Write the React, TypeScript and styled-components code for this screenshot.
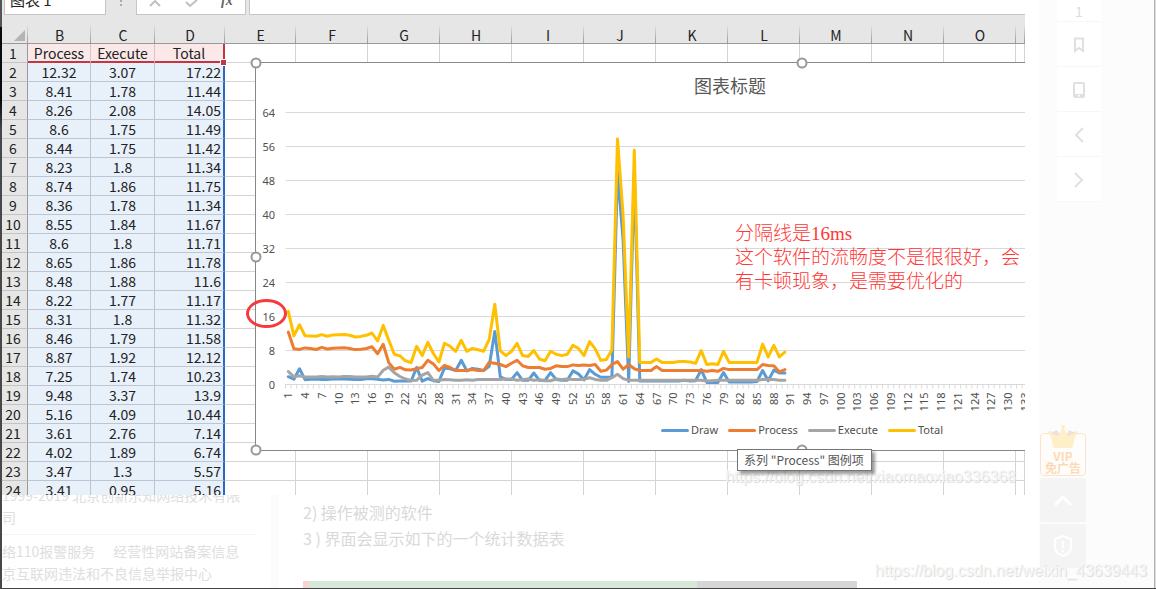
import React from "react";
import styled, { createGlobalStyle, css } from "styled-components";

const sans = `"Noto Sans CJK SC", "Noto Sans", sans-serif`;
const chartFont = `"Noto Sans", "Noto Sans CJK SC", sans-serif`;

const GlobalStyle = createGlobalStyle`
  *, *::before, *::after { box-sizing: border-box; }
  body { margin: 0; background: #fff; font-family: ${sans}; }
  button, input { font: inherit; color: inherit; }
`;

/* ---------- data ---------- */

const processData = [
  12.32, 8.41, 8.26, 8.6, 8.44, 8.23, 8.74, 8.36, 8.55, 8.6, 8.65, 8.48, 8.22, 8.31, 8.46, 8.87, 7.25,
  9.48, 5.16, 3.61, 4.02, 3.47, 3.41, 3.7, 4, 5.7, 4.8, 3.3, 4.5, 4, 3.3, 3.3, 3.3, 3.5, 3.3, 3.3, 5.2,
  5, 4.7, 4.2, 5, 5.7, 4.4, 4, 4, 4, 3.6, 3.8, 4.4, 4.2, 4.2, 4.6, 4.5, 4.6, 4.5, 4.7, 3.1, 3.4, 4.7,
  5.4, 3.6, 4.7, 3.7, 3.3, 3.3, 3.3, 4.2, 3.3, 3.3, 3.3, 3.3, 3.3, 3.3, 3.3, 3.3, 3.1, 3.3, 3.1, 3.8,
  3.5, 3.5, 3.5, 3.5, 3.5, 3.5, 4.7, 4.5, 4.4, 3, 3.5,
];
const executeData = [
  3.07, 1.78, 2.08, 1.75, 1.75, 1.8, 1.86, 1.78, 1.84, 1.8, 1.86, 1.88, 1.77, 1.8, 1.79, 1.92, 1.74,
  3.37, 4.09, 2.76, 1.89, 1.3, 0.95, 1, 2.2, 2.8, 1, 1, 1.2, 1.1, 1, 1, 1.1, 1, 1.2, 1.2, 1.2, 1.2,
  1.2, 1.3, 1.3, 1, 1.2, 1.3, 1, 1.1, 0.9, 0.9, 1.3, 1.2, 1.3, 1.2, 1.2, 1.2, 1.6, 1.2, 1, 1, 1.6,
  2.4, 1.4, 1, 1, 1, 1, 1, 1, 1, 1, 1, 1, 1, 1, 1, 1, 0.8, 0.9, 1, 1, 1, 1, 1, 1, 1, 1, 1.2, 1.2, 1.2,
  1, 1,
];
const totalData = [
  17.22, 11.44, 14.05, 11.49, 11.42, 11.34, 11.75, 11.34, 11.67, 11.71, 11.78, 11.6, 11.17, 11.32,
  11.58, 12.12, 10.23, 13.9, 10.44, 7.14, 6.74, 5.57, 5.16, 9, 6.8, 9.9, 7.3, 5.3, 9.7, 9, 7.8, 10.4,
  7.8, 8.5, 8.2, 7.8, 10.6, 18.9, 7.9, 6.8, 7.8, 9.7, 6.8, 6.6, 8, 6, 5.6, 7.8, 7.1, 6.8, 7.1, 9.2,
  8.5, 6.8, 10.1, 8.4, 5.7, 5.9, 8.2, 57.8, 39.8, 6.5, 55.1, 5.2, 5.2, 5.2, 6, 5.2, 5.2, 5.2, 5.4,
  5.4, 5.3, 5, 8, 4.7, 4.9, 4.7, 7.8, 5.2, 5.2, 5.2, 5.2, 5.2, 5.2, 9.5, 6.5, 9.2, 6.5, 7.6,
];
const drawTail = [
  4, 0.8, 1.4, 0.9, 0.7, 3.9, 3.7, 3.3, 5.7, 3.2, 3.8, 3.6, 3.3, 4.3, 12.5, 1.8, 1.2, 1.2, 2.8, 1, 1,
  2.7, 1, 1, 2.8, 1.2, 1, 1, 3.2, 2.5, 1.1, 3.5, 2.4, 1.7, 1.7, 1.7, 50, 34, 0.7, 50, 0.8, 0.8, 0.8,
  0.8, 0.8, 0.8, 0.8, 0.8, 1, 0.8, 0.9, 3.5, 0.5, 0.5, 0.5, 2.8, 0.6, 0.6, 0.6, 0.6, 0.6, 0.7, 3.3,
  0.9, 3.4, 2.7, 2.7,
];
const drawData = totalData
  .slice(0, 23)
  .map((t, i) => t - processData[i] - executeData[i])
  .concat(drawTail);

const series = [
  { name: "Draw", color: "#5b9bd5", values: drawData },
  { name: "Process", color: "#ed7d31", values: processData },
  { name: "Execute", color: "#a5a5a5", values: executeData },
  { name: "Total", color: "#ffc000", values: totalData },
];

const otherColumns = ["E", "F", "G", "H", "I", "J", "K", "L", "M", "N", "O", ""];

/* ---------- page frame ---------- */

const Page = styled.div`
  display: flex;
  min-height: 100vh;
  background: #fff;
  border-bottom: 1px solid #444;
  position: relative;
  overflow: hidden;
`;
const WindowEdge = styled.div`
  flex: none;
  width: 2px;
  background: linear-gradient(#555 27px, #0a0a0a 27px, #0a0a0a 100px, #484848 130px);
`;
const Content = styled.div`
  flex: 1;
  min-width: 0;
`;

/* ---------- workbook ---------- */

const Workbook = styled.section`
  position: relative;
  height: 495px;
  overflow: hidden;
  background: #fff;
`;
const FormulaBar = styled.div`
  display: flex;
  align-items: flex-start;
  height: 24px;
  padding-left: 2px;
  background: #e6e6e6;
`;
const BarBox = styled.div<{ $width?: number }>`
  display: flex;
  align-items: flex-end;
  height: 15px;
  overflow: hidden;
  background: #fff;
  border: 1px solid #c6c6c6;
  border-top: 0;
  ${(p) => (p.$width ? `flex: none; width: ${p.$width}px;` : "flex: 1; border-right: 0;")}
`;
const NameInput = styled.input`
  flex: none;
  width: 100%;
  height: 24px;
  padding: 0 5px 6px;
  border: 0;
  background: transparent;
  font-size: 15px;
  line-height: 18px;
  color: #222;
`;
const FormulaInput = styled(NameInput)``;
const BarDots = styled.svg`
  flex: none;
  width: 30px;
  height: 14px;
`;
const BarIcons = styled.svg`
  width: 108px;
  height: 14px;
`;
const BarGap = styled.div`
  flex: none;
  width: 3px;
`;

const Grid = styled.table`
  width: 100%;
  table-layout: fixed;
  border-collapse: separate;
  border-spacing: 0;
  font-size: 14px;
  line-height: 17px;
  color: #222;
`;
const Col = styled.col<{ $width?: number }>`
  ${(p) => p.$width && `width: ${p.$width}px;`}
`;
const ColHead = styled.th`
  height: 20px;
  padding: 3px 0 0;
  font-weight: 400;
  line-height: 16px;
  background: linear-gradient(#e6e6e6, #9a9a9a) right / 1px 100% no-repeat #e6e6e6;
  border-bottom: 1px solid #999;
`;
const Corner = styled(ColHead)`
  line-height: 0;
  text-align: right;
  padding-right: 3px;
`;
const RowHead = styled.th`
  height: 19px;
  padding: 1px 3px 0 0;
  font-weight: 400;
  background: #e6e6e6;
  border-right: 1px solid #999;
  border-bottom: 1px solid #c4c4c4;
`;
const Cell = styled.td<{ $kind?: "title" | "value"; $last?: boolean }>`
  height: 19px;
  padding: 1px 0 0;
  text-align: center;
  white-space: nowrap;
  border-right: 1px solid #d4d4d4;
  border-bottom: 1px solid #d4d4d4;
  ${(p) =>
    p.$kind === "title" &&
    css`
      background: #fbe9ea;
      border-right-color: #d9c3c8;
      border-bottom-color: #c43644;
      box-shadow: inset 0 -1px 0 #c43644;
    `}
  ${(p) =>
    p.$kind === "value" &&
    css`
      background: #e8f0fa;
      border-right-color: #bcc5d3;
      border-bottom-color: #bcc5d3;
    `}
  ${(p) =>
    p.$last &&
    css`
      border-right: 2px solid ${p.$kind === "title" ? "#c43644" : "#2f66c6"};
    `}
  ${(p) =>
    p.$last &&
    p.$kind === "value" &&
    css`
      padding-right: 2px;
      text-align: right;
    `}
`;
const RangeHandle = styled.span`
  position: absolute;
  left: 218px;
  top: 59px;
  width: 7px;
  height: 7px;
  background: #c43644;
  border: 1px solid #fff;
`;

/* ---------- chart object floating above the cells ---------- */

const ChartFrame = styled.figure`
  position: absolute;
  left: 253px;
  top: 62px;
  width: 1094px;
  margin: 0;
  padding-bottom: 10px;
  background: #fff;
  border: 1px solid #888;
  font-family: ${chartFont};
  color: #505050;
`;
const ChartTitle = styled.figcaption`
  padding: 10px 0 1px 438px;
  font-family: ${sans};
  font-size: 18px;
  line-height: 24px;
  color: #595959;
`;
const Plot = styled.svg`
  display: block;
  width: 1092px;
  height: 322px;
  font-size: 11px;
`;
const Legend = styled.ul`
  display: flex;
  justify-content: center;
  gap: 10px;
  margin: 0;
  padding: 0;
  list-style: none;
  font-size: 11px;
  line-height: 20px;
`;
const LegendItem = styled.li<{ $color: string }>`
  display: flex;
  align-items: center;
  gap: 2px;
  &::before {
    content: "";
    width: 28px;
    height: 3px;
    border-radius: 2px;
    background: ${(p) => p.$color};
  }
`;
const Handle = styled.span<{ $x: string; $y: string }>`
  position: absolute;
  left: ${(p) => p.$x};
  top: ${(p) => p.$y};
  width: 11px;
  height: 11px;
  transform: translate(-50%, -50%);
  border: 2px solid #999;
  border-radius: 50%;
  background: #fff;
`;
const Note = styled.p`
  position: absolute;
  left: 733px;
  top: 222px;
  margin: 0;
  font-family: "Liberation Serif", "Noto Sans CJK SC", serif;
  font-size: 19px;
  font-weight: 300;
  line-height: 24px;
  color: #ff3838;
  white-space: nowrap;
`;
const Circle = styled.span`
  position: absolute;
  left: 244px;
  top: 299px;
  width: 41px;
  height: 29px;
  border: 3px solid #f43a3c;
  border-radius: 50%;
`;
const Tooltip = styled.div`
  position: absolute;
  left: 735px;
  top: 449px;
  padding: 0 7px 0 6px;
  border: 1px solid #767676;
  background: #fff;
  box-shadow: 3px 3px 3px rgba(0, 0, 0, 0.4);
  font-size: 12px;
  line-height: 20px;
  color: #555;
  white-space: nowrap;
`;
const Watermark = styled.span<{ $right: number; $bottom: number }>`
  position: absolute;
  right: ${(p) => p.$right}px;
  bottom: ${(p) => p.$bottom}px;
  font-family: "Liberation Sans", sans-serif;
  font-size: 16px;
  line-height: 20px;
  color: #f6f6f6;
  text-shadow: 1px 1px 1px #d8d8d8;
  white-space: nowrap;
`;

/* ---------- faded page below ---------- */

const Below = styled.div`
  display: flex;
  height: 93px;
  overflow: hidden;
`;
const SiteInfo = styled.aside`
  flex: none;
  width: 277px;
  border-right: 8px solid #fbfbfb;
  font-size: 14px;
  line-height: 22px;
  color: #dedede;
  white-space: nowrap;
`;
const Company = styled.p`
  width: 253px;
  height: 40px;
  margin: 0 0 5px;
  border-bottom: 1px solid #f4f4f4;
  display: flex;
  align-items: flex-end;
  overflow: hidden;
  padding-bottom: 6px;
`;
const InfoLine = styled.div`
  display: flex;
  gap: 18px;
  overflow: hidden;
`;
const InfoLink = styled.a`
  color: inherit;
  text-decoration: none;
`;
const Article = styled.article`
  flex: 1;
  display: flex;
  flex-direction: column;
  padding: 4px 0 0 24px;
  font-size: 16px;
  line-height: 26px;
  color: #d9d9d9;
`;
const Step = styled.p`
  margin: 0;
`;
const Banner = styled.div`
  display: flex;
  height: 7px;
  margin-top: auto;
`;
const BannerPart = styled.span<{ $width: number; $color: string }>`
  width: ${(p) => p.$width}px;
  background: ${(p) => p.$color};
`;

/* ---------- right rail ---------- */

const Rail = styled.aside`
  flex: none;
  display: flex;
  flex-direction: column;
  width: 131px;
  border-left: 14px solid #fff;
  border-right: 1px solid #e0e0e0;
  box-shadow: inset -1px 0 0 #b0b0b0;
  background: #fcfcfc;
`;
const Tools = styled.nav`
  display: flex;
  flex-direction: column;
  gap: 1px;
  width: 44px;
  margin-left: 18px;
`;
const ToolButton = styled.button<{ $short?: boolean }>`
  display: flex;
  align-items: center;
  justify-content: center;
  height: ${(p) => (p.$short ? 21 : 44)}px;
  padding: ${(p) => (p.$short ? 0 : 2)}px 0 0;
  border: 0;
  background: #fff;
  box-shadow: 0 1px 0 #f7f7f7;
  font-size: 14px;
  line-height: 16px;
  color: #e0dcd4;
`;
const Floating = styled.div`
  display: flex;
  flex-direction: column;
  gap: 2px;
  width: 46px;
  margin: auto 0 20px 1px;
`;
const VipButton = styled.button`
  position: relative;
  height: 43px;
  padding: 15px 0 0;
  border: 1px solid #fde3cb;
  border-radius: 4px;
  background: #fffdfb;
  font-size: 12px;
  line-height: 12px;
  color: #fdd9b8;
  white-space: nowrap;
`;
const Crown = styled.svg`
  position: absolute;
  left: 7px;
  top: -10px;
  width: 30px;
  height: 26px;
`;
const VipText = styled.span`
  display: block;
  font-weight: 700;
`;
const FloatButton = styled.button`
  display: flex;
  align-items: center;
  justify-content: center;
  height: 44px;
  padding: 0;
  border: 0;
  border-radius: 2px;
  background: #f4f4f4;
`;

/* ---------- components ---------- */

const STEP = 5.58;
const AXIS_X = 29.5;
const ZERO_Y = 286.5;
const UNIT = 4.25;

function LinePlot() {
  const ticks = Array.from({ length: 190 }, (_, i) => AXIS_X + i * STEP);
  const labels = Array.from({ length: 62 }, (_, i) => 1 + i * 3);
  return (
    <Plot role="img" aria-label="Draw, Process, Execute, Total">
      {[0, 8, 16, 24, 32, 40, 48, 56, 64].map((v) => (
        <g key={v}>
          <line x1={AXIS_X} x2={1080} y1={ZERO_Y - v * UNIT} y2={ZERO_Y - v * UNIT} stroke="#d9d9d9" />
          <text x={19} y={ZERO_Y + 4 - v * UNIT} textAnchor="end" fill="#505050">
            {v}
          </text>
        </g>
      ))}
      {ticks.map((x, i) => (
        <line key={i} x1={x} x2={x} y1={ZERO_Y} y2={ZERO_Y + 4} stroke="#d9d9d9" />
      ))}
      {labels.map((n) => (
        <text
          key={n}
          transform={`translate(${AXIS_X + (n - 0.5) * STEP + 4} ${ZERO_Y + 8}) rotate(-90)`}
          textAnchor="end"
          fill="#505050"
        >
          {n}
        </text>
      ))}
      {series.map((s) => (
        <polyline
          key={s.name}
          points={s.values
            .map((v, i) => `${(AXIS_X + (i + 0.5) * STEP).toFixed(1)},${(ZERO_Y - v * UNIT).toFixed(1)}`)
            .join(" ")}
          fill="none"
          stroke={s.color}
          strokeWidth={3}
          strokeLinejoin="round"
          strokeLinecap="round"
        />
      ))}
    </Plot>
  );
}

function Chart() {
  return (
    <ChartFrame>
      <ChartTitle>图表标题</ChartTitle>
      <LinePlot />
      <Legend>
        {series.map((s) => (
          <LegendItem key={s.name} $color={s.color}>
            {s.name}
          </LegendItem>
        ))}
      </Legend>
      <Handle $x="0" $y="0" />
      <Handle $x="50%" $y="0" />
      <Handle $x="0" $y="50%" />
      <Handle $x="0" $y="100%" />
      <Handle $x="50%" $y="100%" />
    </ChartFrame>
  );
}

function Sheet() {
  return (
    <Grid>
      <colgroup>
        <Col $width={26} />
        <Col $width={63} />
        <Col $width={64} />
        <Col $width={70} />
        <Col $width={71} />
        {otherColumns.slice(1).map((c, i) => (
          <Col key={i} $width={c ? 72 : undefined} />
        ))}
      </colgroup>
      <thead>
        <tr>
          <Corner aria-label="Select all">
            <svg width="11" height="11" viewBox="0 0 11 11">
              <path d="M11 0V11H0Z" fill="#b4b4b4" />
            </svg>
          </Corner>
          {["B", "C", "D", ...otherColumns].map((c, i) => (
            <ColHead key={i}>{c}</ColHead>
          ))}
        </tr>
      </thead>
      <tbody>
        <tr>
          <RowHead>1</RowHead>
          <Cell $kind="title">Process</Cell>
          <Cell $kind="title">Execute</Cell>
          <Cell $kind="title" $last>
            Total
          </Cell>
          {otherColumns.map((_, i) => (
            <Cell key={i} />
          ))}
        </tr>
        {processData.slice(0, 23).map((value, r) => (
          <tr key={r}>
            <RowHead>{r + 2}</RowHead>
            <Cell $kind="value">{value}</Cell>
            <Cell $kind="value">{executeData[r]}</Cell>
            <Cell $kind="value" $last>
              {totalData[r]}
            </Cell>
            {otherColumns.map((_, i) => (
              <Cell key={i} />
            ))}
          </tr>
        ))}
      </tbody>
    </Grid>
  );
}

export default function App() {
  return (
    <>
      <GlobalStyle />
      <Page>
        <WindowEdge />
        <Content>
          <Workbook>
            <FormulaBar>
              <BarBox $width={102}>
                <NameInput aria-label="Name box" defaultValue="图表 1" />
              </BarBox>
              <BarDots>
                <path d="M15 0v2M15 4v2" stroke="#aaa" strokeWidth="2" />
              </BarDots>
              <BarBox $width={110}>
                <BarIcons>
                  <path d="M13 6l5-5 5 5M49 2l4 4 7-6" fill="none" stroke="#c0c0c0" strokeWidth="2" />
                  <text x="84" y="5" fontFamily="Liberation Serif, serif" fontStyle="italic" fontWeight="700" fontSize="14" fill="#666">
                    fx
                  </text>
                </BarIcons>
              </BarBox>
              <BarGap />
              <BarBox>
                <FormulaInput aria-label="Formula" />
              </BarBox>
            </FormulaBar>
            <Sheet />
            <RangeHandle />
            <Chart />
            <Note>
              分隔线是16ms
              <br />
              这个软件的流畅度不是很很好，会
              <br />
              有卡顿现象，是需要优化的
            </Note>
            <Circle />
            <Watermark $right={9} $bottom={8}>
              https://blog.csdn.net/xiaomaoxiao336368
            </Watermark>
            <Tooltip role="tooltip">系列 "Process" 图例项</Tooltip>
          </Workbook>
          <Below>
            <SiteInfo>
              <Company>
                <span>
                  1999-2019 北京创新乐知网络技术有限
                  <br />司
                </span>
              </Company>
              <InfoLine>
                <InfoLink href="#police">络110报警服务</InfoLink>
                <InfoLink href="#record">经营性网站备案信息</InfoLink>
              </InfoLine>
              <InfoLine>
                <InfoLink href="#report">京互联网违法和不良信息举报中心</InfoLink>
              </InfoLine>
            </SiteInfo>
            <Article>
              <Step>2) 操作被测的软件</Step>
              <Step>3 ) 界面会显示如下的一个统计数据表</Step>
              <Banner>
                <BannerPart $width={6} $color="#f8d4d0" />
                <BannerPart $width={388} $color="#d7e7da" />
                <BannerPart $width={160} $color="#d6d6d6" />
              </Banner>
            </Article>
          </Below>
        </Content>
        <Rail>
          <Tools aria-label="Article tools">
            <ToolButton $short>1</ToolButton>
            <ToolButton aria-label="Bookmark">
              <svg width="12" height="16" viewBox="0 0 12 16" fill="none" stroke="#e0e0e0" strokeWidth="2">
                <path d="M2 1.500h8v12.500l-4-3-4 3z" />
              </svg>
            </ToolButton>
            <ToolButton aria-label="Phone">
              <svg width="12" height="16" viewBox="0 0 12 16">
                <path
                  d="M2 0h8a2 2 0 0 1 2 2v12a2 2 0 0 1-2 2H2a2 2 0 0 1-2-2V2a2 2 0 0 1 2-2zM2 2v10h8V2zM5 13v1.500h2V13z"
                  fill="#e0e0e0"
                  fillRule="evenodd"
                />
              </svg>
            </ToolButton>
            <ToolButton aria-label="Previous">
              <svg width="10" height="16" viewBox="0 0 10 16" fill="none" stroke="#e0e0e0" strokeWidth="2">
                <path d="M9 1L2 8l7 7" />
              </svg>
            </ToolButton>
            <ToolButton aria-label="Next">
              <svg width="10" height="16" viewBox="0 0 10 16" fill="none" stroke="#e0e0e0" strokeWidth="2">
                <path d="M1 1l7 7-7 7" />
              </svg>
            </ToolButton>
          </Tools>
          <Floating>
            <VipButton>
              <Crown viewBox="0 0 30 26">
                <path d="M2 9l7-3 6 10 6-10 7 3-4 12H6z" fill="#f1dfe0" />
                <path d="M15 3l5 9 8-3-3 13q0 2-2 2H7q-2 0-2-2L2 9l8 3z" fill="#fdf0c8" />
                <circle cx="15" cy="3" r="2" fill="#fdeec4" />
                <circle cx="2" cy="9" r="2" fill="#fdeec4" />
                <circle cx="28" cy="9" r="2" fill="#fdeec4" />
              </Crown>
              <VipText>VIP</VipText>
              <VipText>免广告</VipText>
            </VipButton>
            <FloatButton aria-label="Back to top">
              <svg width="20" height="14" viewBox="0 0 20 14" fill="none" stroke="#fff" strokeWidth="3">
                <path d="M2 12l8-8 8 8" />
              </svg>
            </FloatButton>
            <FloatButton aria-label="Report">
              <svg width="20" height="22" viewBox="0 0 20 22" fill="none" stroke="#fff" strokeWidth="2">
                <path d="M10 1l8 3v8q0 6-8 9-8-3-8-9V4zM10 6v7M10 15v2" />
              </svg>
            </FloatButton>
          </Floating>
        </Rail>
        <Watermark $right={9} $bottom={7}>
          https://blog.csdn.net/weixin_43639443
        </Watermark>
      </Page>
    </>
  );
}
